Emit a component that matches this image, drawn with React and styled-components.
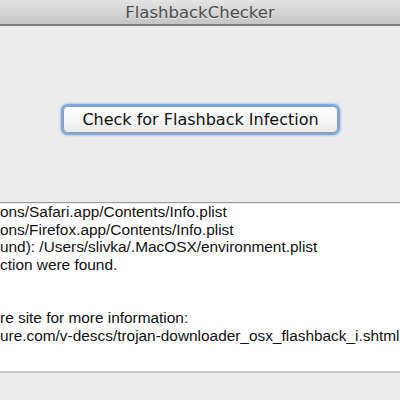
import React from "react";
import styled, { createGlobalStyle } from "styled-components";

const GlobalStyle = createGlobalStyle`
html, body {
    margin: 0;
    padding: 0;
    overflow: hidden;
    background: #ececec;
}
`;

const lines = [
    "ons/Safari.app/Contents/Info.plist",
    "ons/Firefox.app/Contents/Info.plist",
    "und): /Users/slivka/.MacOSX/environment.plist",
    "ction were found.",
    "",
    "",
    "re site for more information:",
    "ure.com/v-descs/trojan-downloader_osx_flashback_i.shtml",
];

function App() {
    return (
        <Window>
            <GlobalStyle />
            <TitleBar>
                <Title>FlashbackChecker</Title>
            </TitleBar>
            <ButtonRow>
                <CheckButton type="button">Check for Flashback Infection</CheckButton>
            </ButtonRow>
            <Output>
                {lines.map((line, i) => (
                    <Line key={i}>{line || "\u00a0"}</Line>
                ))}
            </Output>
        </Window>
    );
}

const Window = styled.div`
width: 400px;
height: 400px;
display: flex;
flex-direction: column;
background: #ececec;
overflow: hidden;
`;

const TitleBar = styled.div`
height: 24px;
flex-shrink: 0;
display: flex;
align-items: center;
justify-content: center;
background: linear-gradient(#e4e4e4, #c5c5c5);
border-bottom: 2px solid #7c7c7c;
`;

const Title = styled.div`
font-family: "DejaVu Sans", sans-serif;
font-size: 16.5px;
color: #4b4b4b;
text-shadow: 0 1px 0 rgba(255, 255, 255, 0.6);
padding-top: 1px;
`;

const ButtonRow = styled.div`
display: flex;
justify-content: center;
padding-top: 80px;
`;

const CheckButton = styled.button`
width: 275px;
height: 27px;
padding: 0 0 0 1px;
display: flex;
align-items: center;
justify-content: center;
font-family: "DejaVu Sans", sans-serif;
font-size: 16px;
color: #111;
background: linear-gradient(#ffffff, #f3f3f3 60%, #e9e9e9);
border: 1px solid #8f9cad;
border-radius: 5px;
box-shadow: 0 0 0 2px #7ea7dd, 0 0 2px 3px rgba(110, 155, 215, 0.45);
`;

const Output = styled.div`
margin-top: 69px;
height: 168px;
background: #fff;
border-top: 1px solid #9a9a9a;
border-bottom: 2px solid #c9c9c9;
box-shadow: inset 0 1px 1px rgba(0, 0, 0, 0.08);
font-family: "Liberation Sans", Arial, sans-serif;
font-size: 15.4px;
line-height: 17.7px;
color: #111;
overflow: hidden;
`;

const Line = styled.div`
white-space: pre;
`;

export default App;
